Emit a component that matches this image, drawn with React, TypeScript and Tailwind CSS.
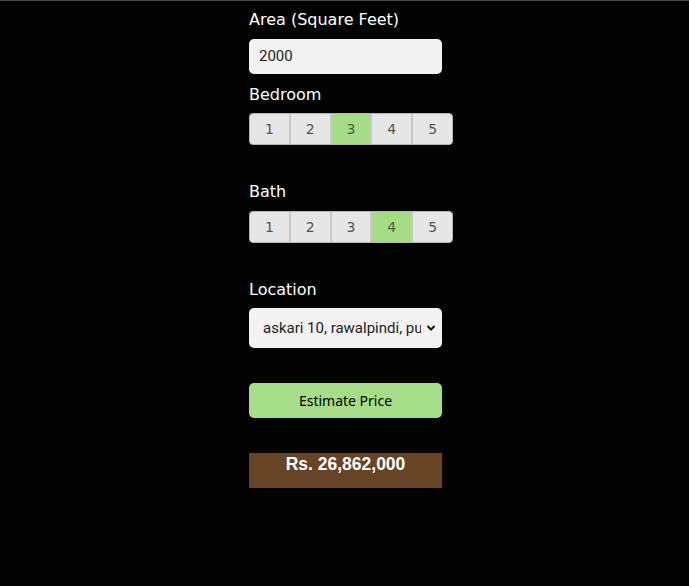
import React from "react";

const font = { fontFamily: '"DejaVu Sans", Verdana, sans-serif' };

function Group({ selected }: { selected: number }) {
  return (
    <div className="flex w-[204px] h-[32px] rounded-[4px] overflow-hidden border border-[#b5b5b5] bg-[#e6e6e6]">
      {[1, 2, 3, 4, 5].map((n, i) => (
        <div
          key={n}
          className={`flex-1 flex items-center justify-center text-[14px] text-[#555] ${i > 0 ? "border-l-2 border-[#c8c8c8]" : ""} ${n === selected ? "bg-[#a6dc86]" : ""}`}
          style={{ fontFamily: '"DejaVu Sans", sans-serif' }}
        >
          {n}
        </div>
      ))}
    </div>
  );
}

export default function App() {
  return (
    <div className="w-[689px] h-[586px] bg-[#030303] border-t border-[#4a4a4a]" style={font}>
      <div className="ml-[249px] flex flex-col">
        <div className="mt-[8px] text-white text-[16px] leading-[22px]">Area (Square Feet)</div>
        <div className="mt-[8px] w-[193px] h-[35px] rounded-[5px] bg-[#f2f2f2] flex items-center pl-[10px] text-[15px] text-[#222]" style={{ fontFamily: 'Roboto, sans-serif' }}>2000</div>
        <div className="mt-[10px] text-white text-[16px] leading-[22px]">Bedroom</div>
        <div className="mt-[7px]"><Group selected={3} /></div>
        <div className="mt-[36px] text-white text-[16px] leading-[22px]">Bath</div>
        <div className="mt-[8px]"><Group selected={4} /></div>
        <div className="mt-[36px] text-white text-[16px] leading-[22px]">Location</div>
        <div className="mt-[7px] w-[193px] h-[40px] rounded-[5px] bg-[#f2f2f2] flex items-center justify-between pl-[14px] pr-[6px] text-[15px] text-[#222]" style={{ fontFamily: 'Roboto, sans-serif' }}>
          <span className="overflow-hidden whitespace-nowrap w-[158px]">askari 10, rawalpindi, punjab</span>
          <svg width="10" height="8" viewBox="0 0 10 8"><path d="M1.5 2 L5 5.5 L8.5 2" stroke="#111" strokeWidth="2" fill="none" /></svg>
        </div>
        <div className="mt-[35px] w-[193px] h-[35px] rounded-[5px] bg-[#a6dd88] flex items-center justify-center text-[14px] text-black" style={{ fontFamily: '"Noto Sans", sans-serif' }}>Estimate Price</div>
        <div className="mt-[35px] w-[193px] h-[35px] bg-[#674426] flex justify-center text-white text-[17.5px] font-bold leading-[22px]" style={{ fontFamily: '"Liberation Sans", Arial, sans-serif' }}>Rs. 26,862,000</div>
      </div>
    </div>
  );
}
